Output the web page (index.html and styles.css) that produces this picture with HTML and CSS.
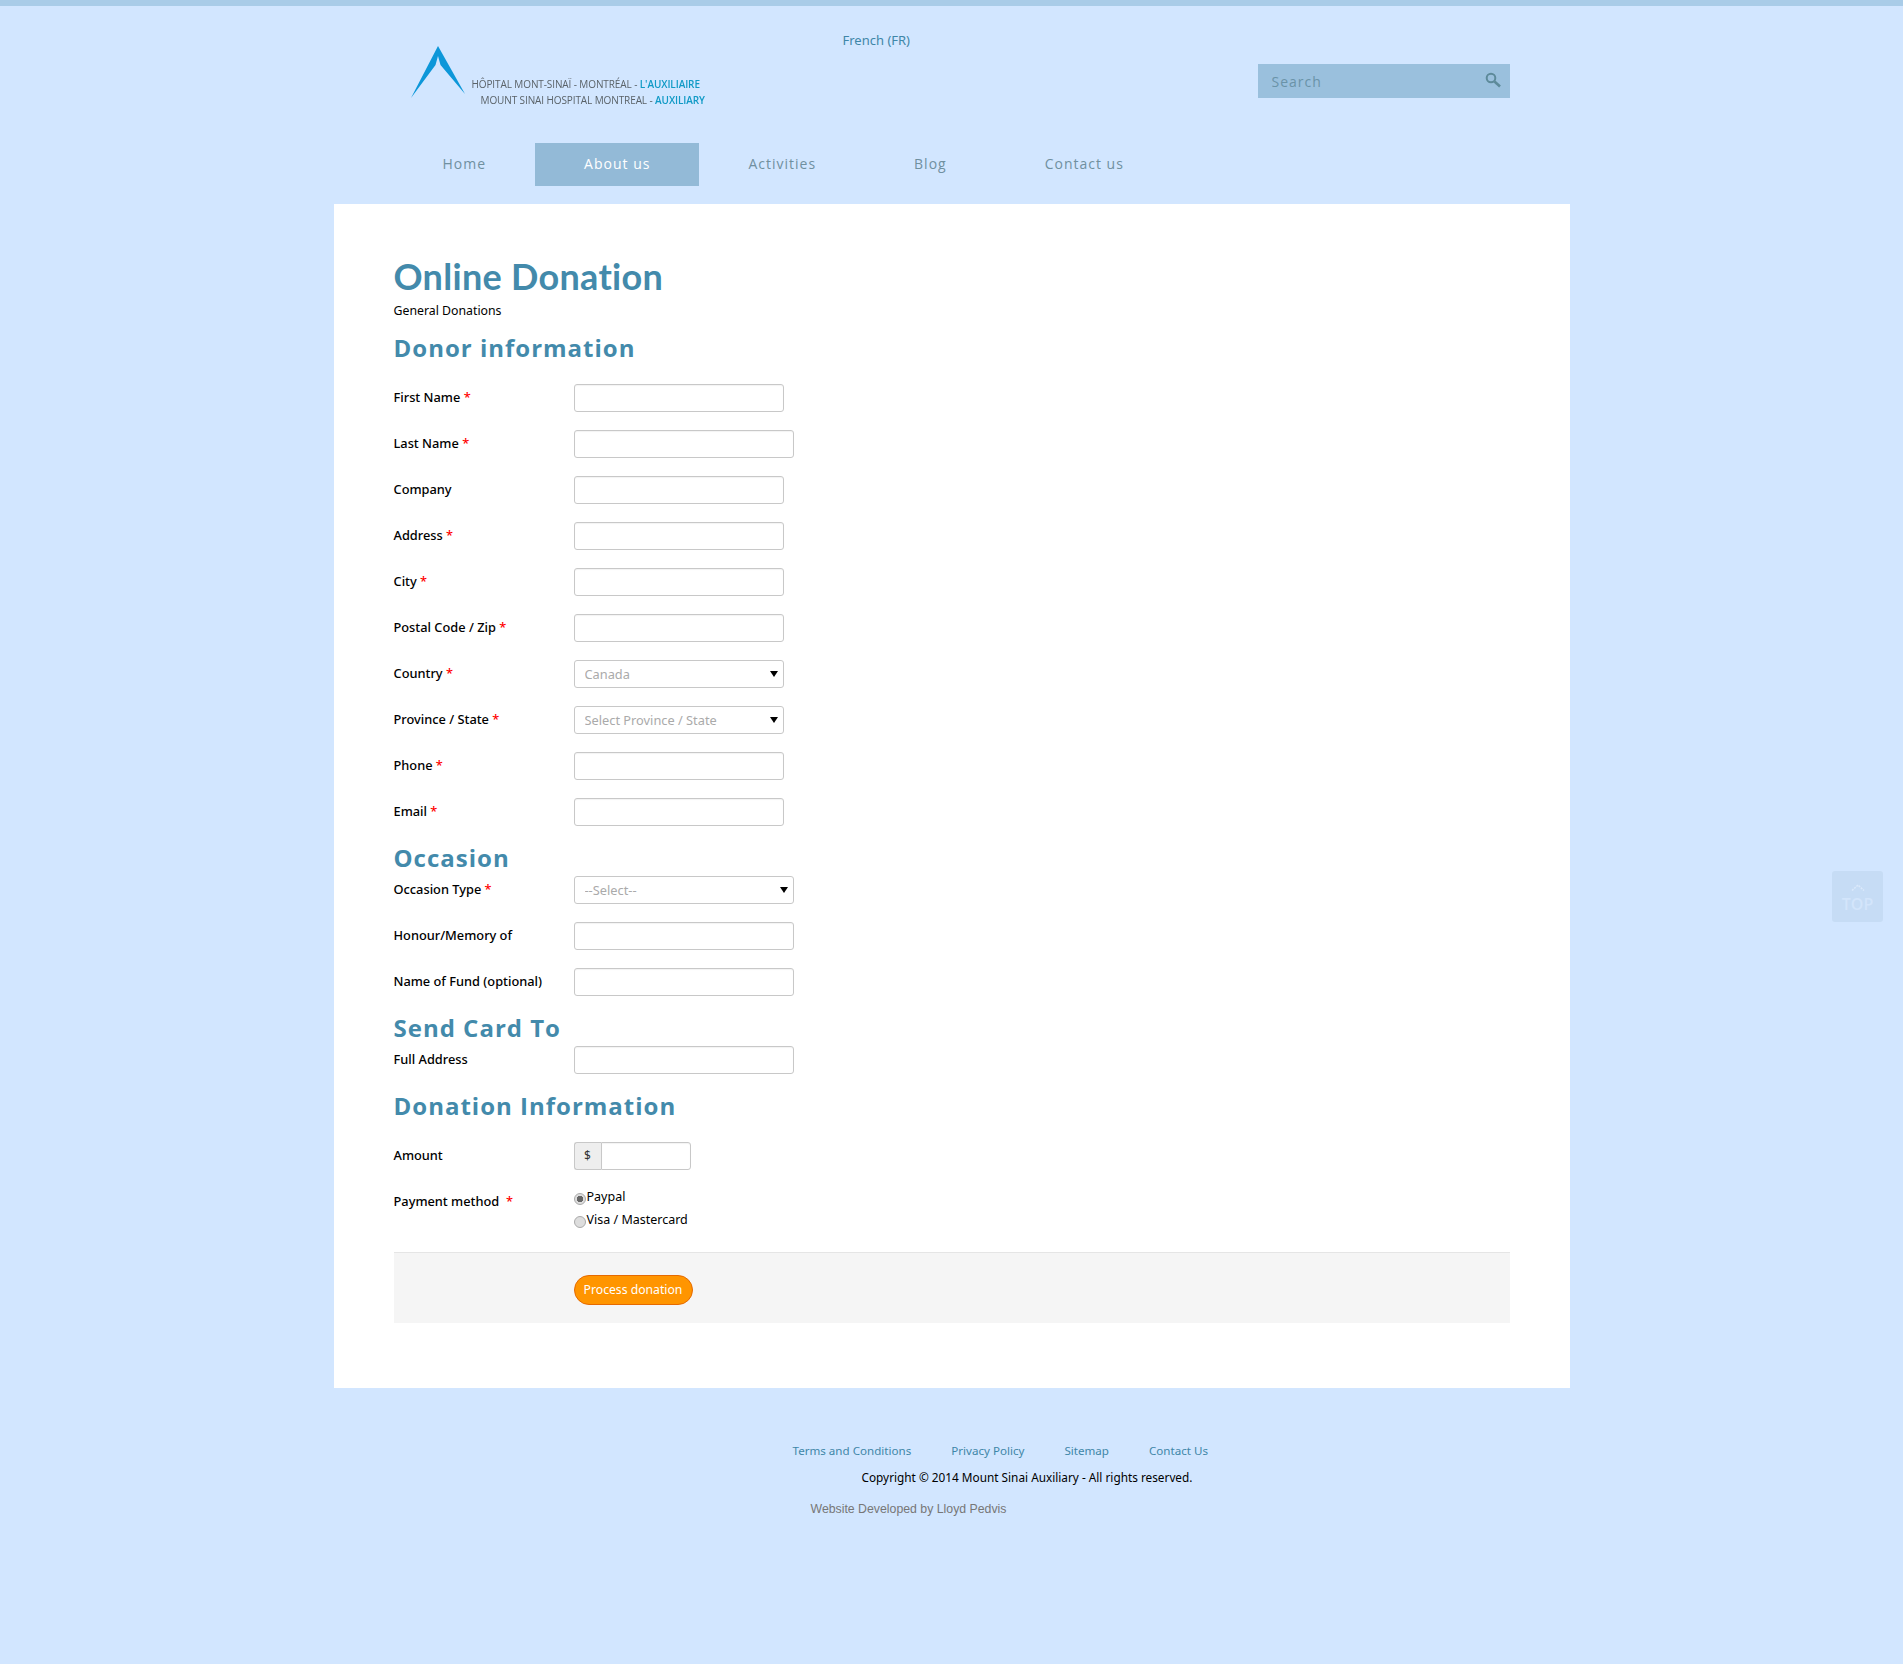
FILE: index.html
```html
<!DOCTYPE html>
<html lang="en">
<head>
<meta charset="utf-8">
<title>Online Donation</title>
<link rel="stylesheet" href="styles.css">
</head>
<body>
<div class="topbar"></div>
<header class="site-header">
  <div class="header-top">
    <a class="logo" href="#">
      <svg class="logo-mark" width="56" height="54" viewBox="0 0 56 54"><path d="M28 1 L55 49 L30.500 20 L28 11 L25.500 20 L1 53 Z" fill="#0d97d9"/></svg>
      <span class="logo-text">
        <span class="logo-line">HÔPITAL MONT-SINAÏ - MONTRÉAL - <b>L'AUXILIAIRE</b></span>
        <span class="logo-line logo-line-en">MOUNT SINAI HOSPITAL MONTREAL - <b>AUXILIARY</b></span>
      </span>
    </a>
    <a class="lang" href="#">French (FR)</a>
    <form class="search">
      <input class="search-input" type="text" placeholder="Search">
      <svg class="search-icon" width="16" height="16" viewBox="0 0 16 16"><circle cx="6" cy="6" r="4.300" fill="none" stroke="#5d8a9a" stroke-width="2"/><path d="M9.500 9.500 L15 14.500" stroke="#5d8a9a" stroke-width="2.600"/></svg>
    </form>
  </div>
  <nav class="nav">
    <a href="#">Home</a>
    <a class="active" href="#">About us</a>
    <a href="#">Activities</a>
    <a href="#">Blog</a>
    <a href="#">Contact us</a>
  </nav>
</header>

<main class="content">
  <h1>Online Donation</h1>
  <p class="sub">General Donations</p>

  <form>
    <h2>Donor information</h2>
    <div class="row"><label>First Name <i>*</i></label><input class="w1" type="text"></div>
    <div class="row"><label>Last Name <i>*</i></label><input class="w2" type="text"></div>
    <div class="row"><label>Company</label><input class="w1" type="text"></div>
    <div class="row"><label>Address <i>*</i></label><input class="w1" type="text"></div>
    <div class="row"><label>City <i>*</i></label><input class="w1" type="text"></div>
    <div class="row"><label>Postal Code / Zip <i>*</i></label><input class="w1" type="text"></div>
    <div class="row"><label>Country <i>*</i></label><span class="sel w1"><select><option>Canada</option></select></span></div>
    <div class="row"><label>Province / State <i>*</i></label><span class="sel w1"><select><option>Select Province / State</option></select></span></div>
    <div class="row"><label>Phone <i>*</i></label><input class="w1" type="text"></div>
    <div class="row"><label>Email <i>*</i></label><input class="w1" type="text"></div>

    <h2 class="tight">Occasion</h2>
    <div class="row"><label>Occasion Type <i>*</i></label><span class="sel w2"><select><option>--Select--</option></select></span></div>
    <div class="row"><label>Honour/Memory of</label><input class="w2" type="text"></div>
    <div class="row"><label>Name of Fund (optional)</label><input class="w2" type="text"></div>

    <h2 class="tight">Send Card To</h2>
    <div class="row"><label>Full Address</label><input class="w2" type="text"></div>

    <h2>Donation Information</h2>
    <div class="row"><label>Amount</label><span class="money"><span class="addon">$</span><input type="text"></span></div>
    <div class="row row-pay"><label>Payment method &nbsp;<i>*</i></label>
      <div class="radios">
        <label class="radio"><input type="radio" name="pay" checked>Paypal</label>
        <label class="radio"><input type="radio" name="pay">Visa / Mastercard</label>
      </div>
    </div>
    <div class="actions"><button type="button" class="btn">Process donation</button></div>
  </form>
</main>

<footer class="footer">
  <div class="foot-links">
    <a href="#">Terms and Conditions</a>
    <a href="#">Privacy Policy</a>
    <a href="#">Sitemap</a>
    <a href="#">Contact Us</a>
  </div>
  <p class="copy">Copyright © 2014 Mount Sinai Auxiliary - All rights reserved.</p>
  <p class="dev">Website Developed by Lloyd Pedvis</p>
</footer>

<a class="to-top" href="#">
  <svg width="14" height="7" viewBox="0 0 14 7"><path d="M1 6.500 L7 1 L13 6.500" fill="none" stroke="#dbe9fb" stroke-width="1.500" stroke-dasharray="2 1"/></svg>
  <span>TOP</span>
</a>
</body>
</html>
```
FILE: styles.css
```css
* { box-sizing: border-box; }
html, body { margin: 0; padding: 0; }
body {
  position: relative;
  min-height: 1664px;
  background: #d2e6ff;
  font-family: "Noto Sans", "Open Sans", sans-serif;
  font-size: 12px;
  color: #000;
}
a { text-decoration: none; }

.topbar { height: 6px; background: #a9cce8; }

.site-header { width: 1116px; height: 198px; margin: 0 auto; }
.header-top { display: flex; height: 137px; align-items: flex-start; }
.logo { display: flex; width: 449px; padding: 39px 0 0 16px; color: #5a6268; }
.logo-mark { flex: none; }
.logo-text { display: flex; flex-direction: column; margin: 32px 0 0 6px; font-family: "Open Sans", sans-serif; font-size: 10px; line-height: 15.500px; letter-spacing: -0.100px; white-space: nowrap; filter: blur(0.3px); }
.logo-line b { font-weight: 600; color: #109ac6; }
.logo-line-en { margin-left: 9px; }
.lang { margin-top: 25px; color: #3f86a8; font-size: 13px; line-height: 18px; }

.search { position: relative; display: block; width: 252px; height: 34px; margin: 58px 0 0 auto; background: #9ac0dd; }
.search input[type="text"] { display: block; width: 100%; height: 34px; padding: 0 40px 0 14px; border: 0; border-radius: 0; background: transparent; box-shadow: none; font-family: "Open Sans", sans-serif; font-size: 14px; letter-spacing: 1px; }
.search-input::placeholder { color: #6a93a8; opacity: 1; }
.search-icon { position: absolute; right: 9px; top: 8px; }

.nav { display: flex; height: 43px; }
.nav a { padding: 0 49px; color: #70909f; font-family: "Open Sans", sans-serif; font-size: 14px; letter-spacing: 1px; line-height: 41px; }
.nav a.active { background: #93bad7; color: #fff; }

.content { width: 1236px; margin: 0 auto; padding: 52px 60px 65px; background: #fff; }
h1 { margin: 0; color: #438aab; font-family: Lato, "Open Sans", sans-serif; font-size: 36px; font-weight: 700; line-height: 40px; letter-spacing: 0.300px; }
.sub { margin: 5px 0 13px; font-size: 12.300px; line-height: 20px; }
h2 { margin: 0 0 22px; color: #438aab; font-family: "Open Sans", sans-serif; font-size: 24px; font-weight: 700; line-height: 28px; letter-spacing: 1px; }
h2.tight { margin-bottom: 4px; }

.row { display: flex; height: 28px; margin-bottom: 18px; }
.row > label { flex: none; width: 180px; font-size: 12.800px; font-weight: 500; line-height: 26px; }
.row i { color: #f00; font-style: normal; }

input[type="text"], select {
  height: 28px;
  border: 1px solid #c8c8c8;
  border-radius: 3px;
  background: #fff;
  font-family: inherit;
  box-shadow: inset 0 1px 1px rgba(0,0,0,.05);
}
.w1 { width: 210px; }
.w2 { width: 220px; }

.sel { position: relative; display: block; height: 28px; }
.sel select { display: block; width: 100%; padding: 0 20px 0 10px; font-size: 12.800px; color: #aaa; appearance: none; box-shadow: none; }
.sel::after { content: ""; position: absolute; right: 6px; top: 11px; border: 4px solid transparent; border-top: 6px solid #000; border-bottom: 0; }

.money { display: flex; width: 117px; height: 28px; }
.addon { width: 27px; height: 28px; border: 1px solid #c8c8c8; border-right: 0; border-radius: 3px 0 0 3px; background: #eee; color: #333; font-size: 12px; line-height: 26px; text-align: center; }
.money input[type="text"] { flex: 1; min-width: 0; border-radius: 0 3px 3px 0; }

.row-pay { height: 46px; }
.radios { display: flex; flex-direction: column; gap: 3px; }
.radio { display: flex; height: 20px; font-size: 12.500px; line-height: 18px; }
.radio input { width: 12px; height: 12px; margin: 5px 1px 0 0; appearance: none; border: 1px solid #aaa; border-radius: 50%; background: #ddd; }
.radio input:checked { background: radial-gradient(circle, #666 0 3px, #ddd 3.500px); }

.actions { height: 71px; padding: 22px 0 0 180px; border-top: 1px solid #e5e5e5; background: #f5f5f5; }
.btn { display: block; width: 119px; height: 30px; padding: 0 0 2px; border: 1px solid #e66a00; border-radius: 15px; background: #ff9500; color: #fff; font-family: inherit; font-size: 12.200px; }

.footer { width: 1236px; margin: 0 auto; padding-top: 55px; }
.foot-links { display: flex; gap: 40px; padding-left: 459px; line-height: 16px; }
.foot-links a { color: #3f86a8; font-size: 11.600px; }
.copy { margin: 10px 0 0; padding-left: 528px; font-size: 11.800px; line-height: 16px; }
.dev { margin: 16px 0 0; padding-left: 477px; color: #777; font-family: "Liberation Sans", Arial, sans-serif; font-size: 12.300px; line-height: 16px; }

.to-top { position: absolute; left: 1832px; top: 871px; display: flex; flex-direction: column; align-items: center; width: 51px; height: 51px; padding-top: 13px; border-radius: 3px; background: #c6dcf5; color: #d3e5fb; font-family: "Open Sans", sans-serif; font-size: 16px; font-weight: 600; line-height: 18px; }
.to-top span { margin-top: 4px; }
```
